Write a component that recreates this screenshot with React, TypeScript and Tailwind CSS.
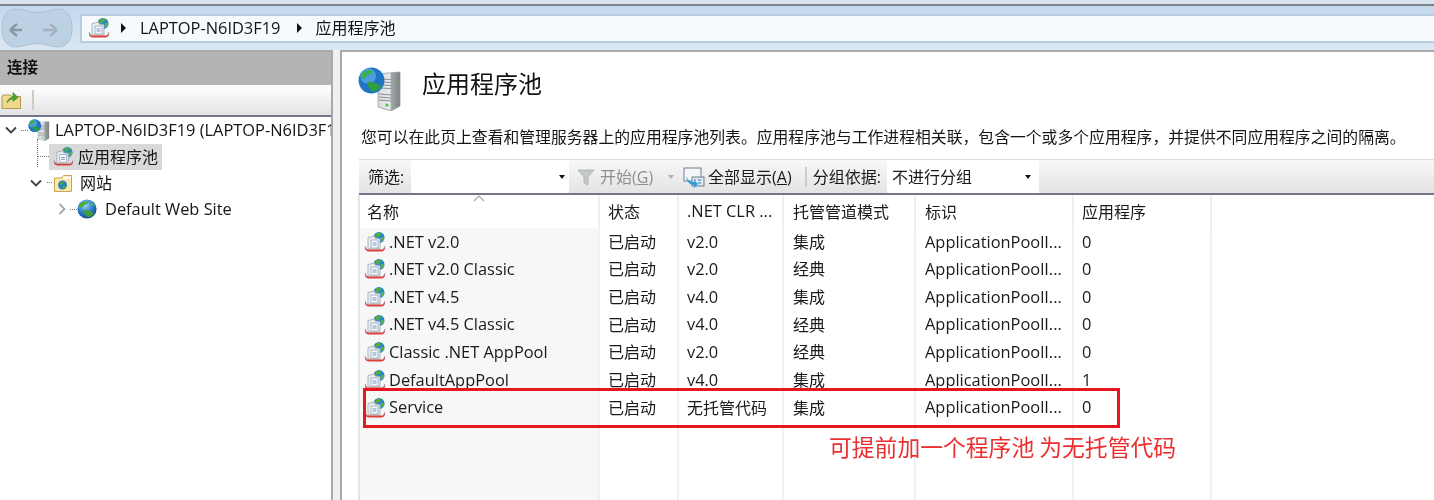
import { ReactNode, useId } from "react";

const FONT = "font-['Open_Sans','Noto_Sans_CJK_SC',sans-serif]";

const Globe = ({ size = 20 }: { size?: number }) => {
  const id = useId();
  return (
    <svg width={size} height={size} viewBox="0 0 24 24" className="shrink-0">
      <defs>
        <radialGradient id={id} cx="40%" cy="30%" r="75%">
          <stop offset="0" stopColor="#9fd4f5" />
          <stop offset="0.55" stopColor="#2a7fc9" />
          <stop offset="1" stopColor="#123f86" />
        </radialGradient>
      </defs>
      <circle cx="12" cy="12" r="11.5" fill={`url(#${id})`} />
      <path d="M5 4.5c3-1.500 6-2 8-1 1 1-1 2.500-3 3-1 1.500-3 1.500-3.500 3.500C5 11 3 10 2.500 9 3 7 4 5.500 5 4.500Z" fill="#4cae3d" />
      <path d="M8 13.500c3-1 7 0 9.500 2 1.500 1 2.500 1 3.500.5-1.500 3.500-4.500 6-8 6-1-2-3.500-2.500-4-4.500-.5-1.500-1.500-3-1-4Z" fill="#3f9e38" />
      <path d="M17 4c1.500.5 3.500 2.500 4 4.500-1.500 0-3-.5-3.500-2-.5-1-1-1.500-.5-2.500Z" fill="#5dbb4a" />
    </svg>
  );
};

const ServerGlobe = ({ large = false }: { large?: boolean }) => {
  const w = large ? 44 : 22;
  const id = useId();
  return (
    <svg width={w} height={w} viewBox="0 0 44 44" className="shrink-0">
      <defs>
        <linearGradient id={id} x1="0" x2="1" y1="0" y2="0">
          <stop offset="0" stopColor="#d9dddf" />
          <stop offset="0.55" stopColor="#e8eaeb" />
          <stop offset="0.6" stopColor="#a2a8aa" />
          <stop offset="1" stopColor="#7c8385" />
        </linearGradient>
      </defs>
      <path d="M20 7l22-2v34l-9 5-13-4Z" fill={`url(#${id})`} stroke="#8c9294" strokeWidth="0.7" />
      <path d="M21 12l12 .5M21 15l12 .5M21 18l12 .5M21 21l12 .5M21 27l12 1M21 30l12 1M21 33l12 1" stroke="#8b9296" strokeWidth="1.200" />
      <circle cx="29" cy="38" r="1.600" fill="#49c43c" />
      <svg x="0" y="0" width="27" height="27" viewBox="0 0 24 24">
        <circle cx="12" cy="12" r="11.500" fill="#1f74c4" />
        <circle cx="9" cy="8" r="7" fill="#6bb9ec" opacity="0.6" />
        <path d="M5 4.500c3-1.500 6-2 8-1 1 1-1 2.500-3 3-1 1.500-3 1.500-3.500 3.500C5 11 3 10 2.500 9 3 7 4 5.500 5 4.500Z" fill="#37b24a" />
        <path d="M8 13.500c3-1 7 0 9.500 2 1.500 1 2.500 1 3.500.5-1.500 3.500-4.500 6-8 6-1-2-3.500-2.500-4-4.500-.5-1.500-1.500-3-1-4Z" fill="#2e9e42" />
      </svg>
    </svg>
  );
};

const PoolIcon = ({ size = 22 }: { size?: number }) => (
  <svg width={size} height={size} viewBox="0 0 22 22" className="shrink-0">
    <circle cx="15" cy="6.500" r="5.500" fill="#2b86cf" />
    <path d="M12 2.500c2-1 4-1 5 0 .5 1.500-1.500 2.500-2.500 3-1 .5-1.500 1-2.500.5Z" fill="#4fae3c" />
    <path d="M17 6c1.500 0 3 .5 3.500 1-.5 2-2 3.500-3.500 4Z" fill="#58b544" />
    <path d="M4 6.500l7-1.500v2l5 .5v10.500H4Z" fill="#eceef0" stroke="#9aa2a8" strokeWidth="0.8" />
    <rect x="7" y="9" width="7" height="8" fill="#fbfcfd" stroke="#8ea4bb" strokeWidth="0.8" />
    <path d="M8.500 12h4M8.500 14h4" stroke="#5f88b8" strokeWidth="0.9" />
    <path d="M1 15.500c-.5 3 1 4.500 3.500 5h13c2.500-.5 4-2 3.500-5-1 2.500-2.500 3-4 3H5c-1.500 0-3-.5-4-3Z" fill="#d9423a" />
    <path d="M1 15l1.500 3.500M21 15l-1.500 3.500" stroke="#8f8f8f" strokeWidth="0.8" />
  </svg>
);

const SiteFolder = () => (
  <svg width="20" height="20" viewBox="0 0 20 20" className="shrink-0">
    <path d="M1.500 5V18.500H18.500V2.500H10.500L9 5Z" fill="#fbe7a8" stroke="#c9a64f" strokeWidth="1" />
    <rect x="10" y="3.500" width="8" height="2.500" fill="#fff" opacity="0.8" />
    <circle cx="9.500" cy="12" r="4.500" fill="#2a7fc9" />
    <path d="M7 9.500c1.500-1 3.500-1 4 0 0 1-2 1.500-2.500 2.500-1 .5-2-.5-1.500-2.500ZM9.500 13c1.500-.5 3 0 4 .5-.5 1.500-2 2.500-3.500 2.500-.5-1-1-2-.5-3Z" fill="#49a83a" />
  </svg>
);

const UpFolder = () => (
  <svg width="20" height="20" viewBox="0 0 20 20">
    <path d="M1 6.500V18.500H19.500V6.500H11L9.500 5H2Z" fill="#efd98c" stroke="#b39a4d" strokeWidth="1" />
    <path d="M6 13c.5-3.500 3-5.500 6-6V2.500l5 5-5 4V9c-2.500 0-4.500 1.500-6 4Z" fill="#3fa535" stroke="#247a20" strokeWidth="0.5" />
  </svg>
);

const Chevron = ({ open, light }: { open: boolean; light?: boolean }) => (
  <svg width="12" height="12" viewBox="0 0 12 12" className="shrink-0">
    <path
      d={open ? "M1 3.500l5 5 5-5" : "M3.500 1l5 5-5 5"}
      fill="none"
      stroke={light ? "#a6a6a6" : "#404040"}
      strokeWidth="1.800"
    />
  </svg>
);

const NavButton = () => (
  <svg width="72" height="40" viewBox="0 0 72 40" className="shrink-0">
    <path
      d="M14 1c9 0 14 3.500 22 3.500S50 1 58 1c8 0 13 8 13 19s-5 19-13 19c-8 0-13-3.500-22-3.500S23 39 14 39C6 39 1 31 1 20S6 1 14 1Z"
      fill="#bdd1e5"
      stroke="#adc0d3"
    />
    <path d="M13 22H25M13 22l7-6M13 22l7 6" transform="translate(-4 0)" fill="none" stroke="#8a97a3" strokeWidth="2.400" />
    <path d="M42 22H56M56 22l-7-6M56 22l-7 6" fill="none" stroke="#a5b1bd" strokeWidth="2.400" />
  </svg>
);

const Caret = () => <span className="block w-0 h-0 border-x-[3.5px] border-x-transparent border-t-[4px] border-t-[#111]" />;
const Crumb = () => <span className="block w-0 h-0 border-y-[5px] border-y-transparent border-l-[5px] border-l-[#111]" />;
const Divider = () => <span className="block h-[20px] w-[2px] bg-[#cfcdbf]" />;

// latin text runs a touch wider than the cjk text in the reference
const sizeFor = (text: string) => (/^[\x00-\x7f]+$/.test(text) ? "text-[16.4px]" : "text-[16px]");

const columns = [
  { label: "名称", width: "w-[240px]", pad: "pl-[7px]" },
  { label: "状态", width: "w-[79px]", pad: "pl-[8px]" },
  { label: ".NET CLR ...", width: "w-[105px]", pad: "pl-[8px]" },
  { label: "托管管道模式", width: "w-[132px]", pad: "pl-[9px]" },
  { label: "标识", width: "w-[158px]", pad: "pl-[9px]" },
  { label: "应用程序", width: "w-[138px]", pad: "pl-[8px]" },
];

const pools = [
  [".NET v2.0", "已启动", "v2.0", "集成", "ApplicationPoolI...", "0"],
  [".NET v2.0 Classic", "已启动", "v2.0", "经典", "ApplicationPoolI...", "0"],
  [".NET v4.5", "已启动", "v4.0", "集成", "ApplicationPoolI...", "0"],
  [".NET v4.5 Classic", "已启动", "v4.0", "经典", "ApplicationPoolI...", "0"],
  ["Classic .NET AppPool", "已启动", "v2.0", "经典", "ApplicationPoolI...", "0"],
  ["DefaultAppPool", "已启动", "v4.0", "集成", "ApplicationPoolI...", "1"],
  ["Service", "已启动", "无托管代码", "集成", "ApplicationPoolI...", "0"],
];

const TreeRow = ({ indent, children, className = "" }: { indent: string; children: ReactNode; className?: string }) => (
  <div className={`h-[26.4px] flex items-center ${indent} ${className}`}>{children}</div>
);

const Sidebar = () => (
  <aside className="w-[333px] shrink-0 border-t-2 border-r-2 border-[#a9a9a9] flex flex-col overflow-hidden bg-white">
    <div className="h-[33px] shrink-0 bg-[#b5b4b4] flex items-center pl-[7px] pb-[2px] text-[15.5px] font-bold text-[#111]">连接</div>
    <div className="h-[32px] shrink-0 bg-gradient-to-b from-white to-[#e4e4e4] border-b-2 border-[#77758c] flex items-center pl-[1px] gap-[11px]">
      <UpFolder />
      <Divider />
    </div>
    <div className="text-[16px] text-[#151515] relative">
      <span className="absolute left-[37px] top-[22px] h-[28px] border-l border-dotted border-[#777]" />
      <TreeRow indent="pl-[5px]" className="whitespace-nowrap">
        <Chevron open />
        <span className="w-[7px] shrink-0 ml-[4px] border-t border-dotted border-[#777]" />
        <ServerGlobe />
        <span className="ml-[5px] text-[16.4px]">LAPTOP-N6ID3F19 (LAPTOP-N6ID3F19)</span>
      </TreeRow>
      <TreeRow indent="pl-[38px]">
        <span className="w-[11px] border-t border-dotted border-[#777]" />
        <span className="h-[26px] flex items-center bg-[#d9d9d9] pl-[4px] pr-[4px] gap-[4px]">
          <PoolIcon size={21} />
          应用程序池
        </span>
      </TreeRow>
      <TreeRow indent="pl-[30px]">
        <Chevron open />
        <span className="w-[5px] ml-[5px] mr-[1px] border-t border-dotted border-[#777]" />
        <SiteFolder />
        <span className="ml-[7px]">网站</span>
      </TreeRow>
      <TreeRow indent="pl-[56px]">
        <Chevron open={false} light />
        <span className="w-[7px] ml-[2px] border-t border-dotted border-[#777]" />
        <Globe />
        <span className="ml-[8px] text-[16.4px]">Default Web Site</span>
      </TreeRow>
    </div>
  </aside>
);

const FilterBar = () => (
  <div className="h-[36px] shrink-0 bg-gradient-to-b from-[#f8f8f8] to-[#e3e3e3] border-t border-[#dcdcdc] border-b-2 border-b-[#77758c] flex items-center text-[16px] text-[#1a1a1a] whitespace-nowrap">
    <span className="w-[52px] pl-[9px]">筛选:</span>
    <span className="w-[158px] h-full bg-white flex items-center justify-end pr-[4px]">
      <Caret />
    </span>
    <span className="ml-[8px] flex items-center text-[#8f8f8f]">
      <svg width="18" height="18" viewBox="0 0 18 18">
        <path d="M1 2h16l-6 7v8l-4-2V9Z" fill="#c4c9c9" stroke="#a9afaf" strokeWidth="0.8" />
      </svg>
      <span className="ml-[5px]">开始(<span className="underline">G</span>)</span>
    </span>
    <span className="ml-[15px]"><span className="block w-0 h-0 border-x-[3px] border-x-transparent border-t-[4px] border-t-[#b0b0b0]" /></span>
    <svg width="22" height="22" viewBox="0 0 22 22" className="ml-[9px]">
      <rect x="1" y="2" width="17" height="13" fill="#f4f6f8" stroke="#6f7f8f" />
      <rect x="9" y="11" width="12" height="9" fill="#dfe8f2" stroke="#6f7f8f" />
      <path d="M11 14h2M15 14h3M11 17h2M15 17h3" stroke="#3f78b5" strokeWidth="1.200" />
      <path d="M3 10c2 4 4 6 8 6v-2l4 4-4 4v-3c-4 0-7-3-8-9Z" fill="#2f9ad6" />
    </svg>
    <span className="ml-[3px]">全部显示(<span className="underline">A</span>)</span>
    <span className="ml-[13px] mr-[6px]"><Divider /></span>
    <span>分组依据:</span>
    <span className="w-[152px] h-full bg-white flex items-center justify-between pl-[5px] pr-[8px] ml-[6px]">
      不进行分组
      <Caret />
    </span>
  </div>
);

const PoolTable = () => (
  <div className="relative flex-1 text-[#1a1a1a] whitespace-nowrap border-l-2 border-[#e4e4e4] -ml-px">
    <div className="flex h-[33px] items-center">
      {columns.map((c, i) => (
        <div
          key={c.label}
          className={`${c.width} ${c.pad} ${sizeFor(c.label)} h-full flex items-center border-r-2 border-[#f0f0f0] relative`}
        >
          {c.label}
          {i === 0 && (
            <svg width="12" height="7" viewBox="0 0 12 7" className="absolute left-[113px] top-0">
              <path d="M1 6l5-5 5 5" fill="none" stroke="#a8a8a8" strokeWidth="1.200" />
            </svg>
          )}
        </div>
      ))}
    </div>
    {pools.map((row) => (
      <div key={row[0]} className="flex h-[27.67px] items-center">
        {row.map((cell, i) =>
          i === 0 ? (
            <div key={i} className={`w-[240px] h-full bg-[#f7f7f7] flex items-center pl-[4px] gap-[3px] border-r-2 border-[#ebf2fb] ${sizeFor(cell)}`}>
              <PoolIcon />
              {cell}
            </div>
          ) : (
            <div key={i} className={`${columns[i].width} ${columns[i].pad} ${sizeFor(cell)} h-full flex items-center border-r-2 border-[#ebf2fb]`}>
              {cell}
            </div>
          ),
        )}
      </div>
    ))}
    <div className="flex h-[80px]">
      {columns.map((c, i) => (
        <div key={c.label} className={`${c.width} h-full border-r-2 border-[#ebf2fb] ${i === 0 ? "bg-[#f7f7f7]" : ""}`} />
      ))}
    </div>
    <div className="absolute left-[3px] top-[193px] w-[757px] h-[40px] border-[3px] border-[#e8161e]" />
    <div className="absolute left-[469px] top-[238px] text-[22.8px] leading-[28px] text-[#ec2e2e] font-['Noto_Sans_CJK_SC',sans-serif]">
      可提前加一个程序池 为无托管代码
    </div>
  </div>
);

export default function App() {
  return (
    <div className={`w-[1434px] h-[500px] overflow-hidden flex flex-col bg-white blur-[0.5px] ${FONT}`}>
      <div className="h-[4px] shrink-0 bg-[#d9e3ee]" />
      <div className="h-[2px] shrink-0 bg-[#7d8288]" />
      <div className="h-[44px] shrink-0 bg-gradient-to-b from-[#c3d8ec] to-[#dbe7f3] flex items-center pl-[1px]">
        <NavButton />
        <div className="ml-[7px] flex-1 h-[29px] bg-[#f7fafd] border-2 border-[#b9cde0] border-r-0 flex items-center pl-[6px] text-[16px] text-[#151515]">
          <PoolIcon size={22} />
          <span className="ml-[11px]"><Crumb /></span>
          <span className="ml-[14px] text-[16.4px]">LAPTOP-N6ID3F19</span>
          <span className="ml-[17px]"><Crumb /></span>
          <span className="ml-[13px]">应用程序池</span>
        </div>
      </div>
      <div className="flex-1 flex min-h-0">
        <Sidebar />
        <div className="w-[7px] shrink-0 bg-[#f0f0f0]" />
        <main className="flex-1 min-w-0 border-t-2 border-l-2 border-[#a9a9a9] flex flex-col overflow-hidden pl-[16px]">
          <div className="h-[74px] shrink-0 flex items-start pt-[15px]">
            <ServerGlobe large />
            <h1 className="ml-[20px] text-[24px] leading-[34px] font-normal text-[#111]">应用程序池</h1>
          </div>
          <p className="h-[33px] shrink-0 pl-[3px] text-[15.83px] leading-[22px] text-[#151515] whitespace-nowrap">
            您可以在此页上查看和管理服务器上的应用程序池列表。应用程序池与工作进程相关联，包含一个或多个应用程序，并提供不同应用程序之间的隔离。
          </p>
          <div className="flex-1 flex flex-col min-h-0 ml-px">
            <FilterBar />
            <PoolTable />
          </div>
        </main>
      </div>
    </div>
  );
}
